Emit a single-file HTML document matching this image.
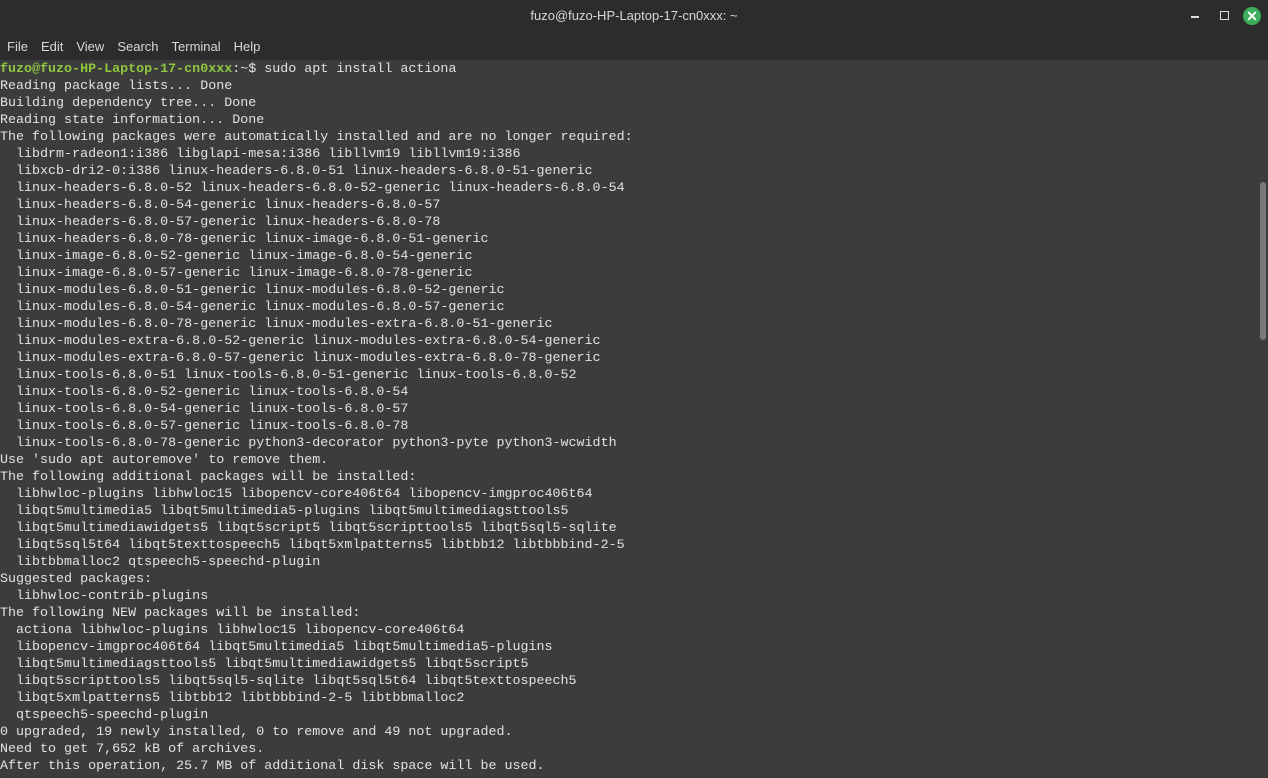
<!DOCTYPE html>
<html><head><meta charset="utf-8"><style>
body{margin:0;width:1268px;height:778px;overflow:hidden;background:#3c3c3c;font-family:"Liberation Sans",sans-serif;position:relative}
#tb{position:absolute;left:0;top:0;width:1268px;height:60px;background:#2c2c2c}
#title{position:absolute;top:8px;width:100%;text-align:center;color:#d8d8d8;font-size:13px}
#menu{position:absolute;top:39px;left:7px;color:#d8d8d8;font-size:13px}
#menu span{margin-right:13px}
#term{position:absolute;left:0;top:61px;margin:0;font-family:"Liberation Mono",monospace;font-size:13.35px;line-height:17px;color:#e2e2e2;white-space:pre}
.g{color:#8ec63f;font-weight:bold}
#sb{position:absolute;left:1260px;top:182px;width:6px;height:158px;background:#7a7a7a;border-radius:3px}
.min{position:absolute;left:1191px;top:16px;width:8px;height:1.5px;background:#ddd}
.max{position:absolute;left:1220px;top:11px;width:7px;height:7px;border:1.5px solid #ddd}
.cl{position:absolute;left:1243px;top:7px;width:18px;height:18px;border-radius:50%;background:#3fae5b;color:#fff;font-size:14px;font-weight:bold;text-align:center;line-height:18px}
</style></head><body>
<div id="tb"><div id="title">fuzo@fuzo-HP-Laptop-17-cn0xxx: ~</div>
<div class="min"></div><div class="max"></div><div class="cl">✕</div>
<div id="menu"><span>File</span><span>Edit</span><span>View</span><span>Search</span><span>Terminal</span><span>Help</span></div></div>
<pre id="term"><span class="g">fuzo@fuzo-HP-Laptop-17-cn0xxx</span>:~$ sudo apt install actiona
Reading package lists... Done
Building dependency tree... Done
Reading state information... Done
The following packages were automatically installed and are no longer required:
  libdrm-radeon1:i386 libglapi-mesa:i386 libllvm19 libllvm19:i386
  libxcb-dri2-0:i386 linux-headers-6.8.0-51 linux-headers-6.8.0-51-generic
  linux-headers-6.8.0-52 linux-headers-6.8.0-52-generic linux-headers-6.8.0-54
  linux-headers-6.8.0-54-generic linux-headers-6.8.0-57
  linux-headers-6.8.0-57-generic linux-headers-6.8.0-78
  linux-headers-6.8.0-78-generic linux-image-6.8.0-51-generic
  linux-image-6.8.0-52-generic linux-image-6.8.0-54-generic
  linux-image-6.8.0-57-generic linux-image-6.8.0-78-generic
  linux-modules-6.8.0-51-generic linux-modules-6.8.0-52-generic
  linux-modules-6.8.0-54-generic linux-modules-6.8.0-57-generic
  linux-modules-6.8.0-78-generic linux-modules-extra-6.8.0-51-generic
  linux-modules-extra-6.8.0-52-generic linux-modules-extra-6.8.0-54-generic
  linux-modules-extra-6.8.0-57-generic linux-modules-extra-6.8.0-78-generic
  linux-tools-6.8.0-51 linux-tools-6.8.0-51-generic linux-tools-6.8.0-52
  linux-tools-6.8.0-52-generic linux-tools-6.8.0-54
  linux-tools-6.8.0-54-generic linux-tools-6.8.0-57
  linux-tools-6.8.0-57-generic linux-tools-6.8.0-78
  linux-tools-6.8.0-78-generic python3-decorator python3-pyte python3-wcwidth
Use 'sudo apt autoremove' to remove them.
The following additional packages will be installed:
  libhwloc-plugins libhwloc15 libopencv-core406t64 libopencv-imgproc406t64
  libqt5multimedia5 libqt5multimedia5-plugins libqt5multimediagsttools5
  libqt5multimediawidgets5 libqt5script5 libqt5scripttools5 libqt5sql5-sqlite
  libqt5sql5t64 libqt5texttospeech5 libqt5xmlpatterns5 libtbb12 libtbbbind-2-5
  libtbbmalloc2 qtspeech5-speechd-plugin
Suggested packages:
  libhwloc-contrib-plugins
The following NEW packages will be installed:
  actiona libhwloc-plugins libhwloc15 libopencv-core406t64
  libopencv-imgproc406t64 libqt5multimedia5 libqt5multimedia5-plugins
  libqt5multimediagsttools5 libqt5multimediawidgets5 libqt5script5
  libqt5scripttools5 libqt5sql5-sqlite libqt5sql5t64 libqt5texttospeech5
  libqt5xmlpatterns5 libtbb12 libtbbbind-2-5 libtbbmalloc2
  qtspeech5-speechd-plugin
0 upgraded, 19 newly installed, 0 to remove and 49 not upgraded.
Need to get 7,652 kB of archives.
After this operation, 25.7 MB of additional disk space will be used.</pre>
<div id="sb"></div>
</body></html>
